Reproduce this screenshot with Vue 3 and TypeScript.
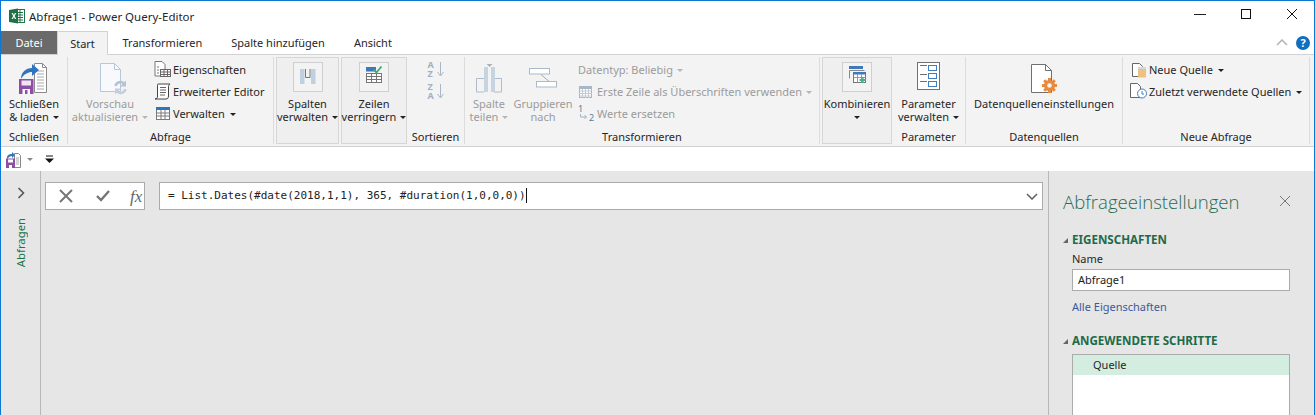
<script setup lang="ts">
const title: string = 'Abfrage1 - Power Query-Editor'
const formula: string = '= List.Dates(#date(2018,1,1), 365, #duration(1,0,0,0))'
const tabs: string[] = ['Transformieren', 'Spalte hinzufügen', 'Ansicht']
</script>

<template>
  <div class="win">
    <header class="titlebar">
      <svg class="xl" width="16" height="16" viewBox="0 0 16 16">
        <rect x="6" y="1.500" width="9.500" height="13" fill="#fff" stroke="#217346" />
        <path d="M8 4.500h6M8 7h6M8 9.500h6M8 12h6M11 2v12" stroke="#217346" stroke-width="1" />
        <path d="M0 2l9-1.500v15L0 14z" fill="#1e7145" />
        <path d="M2.500 5l1.700 3-1.700 3h1.400l1-2 1 2h1.400l-1.700-3 1.700-3H5.900l-1 2-1-2z" fill="#fff" />
      </svg>
      <span class="wintitle">{{ title }}</span>
      <div class="winbtns">
        <svg width="12" height="12" viewBox="0 0 12 12"><path d="M0 5.500h12" stroke="#222" /></svg>
        <svg width="12" height="12" viewBox="0 0 12 12"><rect x="1.500" y=".5" width="9" height="9" fill="none" stroke="#111" /></svg>
        <svg width="12" height="12" viewBox="0 0 12 12"><path d="M1 0l10 10M11 0L1 10" stroke="#111" /></svg>
      </div>
    </header>

    <nav class="tabs">
      <span class="tab file">Datei</span>
      <span class="tab active">Start</span>
      <span v-for="t in tabs" :key="t" class="tab">{{ t }}</span>
      <span class="tab-right">
        <svg width="12" height="7" viewBox="0 0 12 7"><path d="M1 6l5-5 5 5" fill="none" stroke="#b3b3b3" stroke-width="1.500" /></svg>
        <span class="help">?</span>
      </span>
    </nav>

    <section class="ribbon">
      <div class="group g-close">
        <div class="body">
          <button class="big">
            <span class="ico">
              <svg width="30" height="34" viewBox="0 0 30 34">
                <path d="M15.500 3.500h8l4 4v25h-12z" fill="#fff" stroke="#8a8a8a" />
                <path d="M23.500 3.500v4h4" fill="none" stroke="#8a8a8a" />
                <path d="M18 11h7M18 14h7M18 17h7M18 20h7M18 23h7M18 26h7M18 29h7" stroke="#a8a8a8" />
                <path d="M2 19c0-7 5-11 11-11V4l7 6-7 6v-4c-4 0-8 2-11 7z" fill="#2f74c0" />
                <rect x="0" y="19" width="14.500" height="15" fill="#8e4ea6" />
                <rect x="2.500" y="20.500" width="9.500" height="5" fill="#efe6f3" />
                <rect x="3.500" y="29" width="7.500" height="5" fill="#fff" />
                <rect x="6" y="30" width="2.500" height="4" fill="#8e4ea6" />
              </svg>
            </span>
            <span class="lbl">Schließen</span>
            <span class="lbl">&amp; laden<i class="caret" /></span>
          </button>
        </div>
        <div class="gname">Schließen</div>
      </div>

      <div class="group g-query">
        <div class="body">
          <button class="big off w-refresh">
            <span class="ico">
              <svg class="ovf" width="30" height="32" viewBox="0 0 30 32">
                <path d="M5.500 2.500h14l6 6v22h-20z" fill="#f7f9fc" stroke="#b7c6dc" />
                <path d="M19.500 2.500v6h6" fill="none" stroke="#b7c6dc" />
                <path d="M20.500 25a5 5 0 0 1 8.500-2.500" fill="none" stroke="#b3c3d3" stroke-width="2.500" />
                <path d="M31 19.500v6h-6z" fill="#b3c3d3" />
                <path d="M30.500 28a5 5 0 0 1-8.500 2.500" fill="none" stroke="#c3cfdb" stroke-width="2.500" />
                <path d="M20 33.500v-6h6z" fill="#c3cfdb" />
              </svg>
            </span>
            <span class="lbl">Vorschau</span>
            <span class="lbl">aktualisieren<i class="caret" /></span>
          </button>
          <div class="rows">
            <div class="row">
              <svg width="18" height="17" viewBox="0 0 18 17">
                <path d="M1 .5h7l3 3V15H1z" fill="#fff" stroke="#777" />
                <path d="M3 6h2M3 9h2M3 12h2" stroke="#777" />
                <rect x="6.500" y="8.500" width="10" height="7" fill="#fff" stroke="#666" />
                <path d="M6.500 11h10M6.500 13.500h10M10 8.500v7M13.500 8.500v7" stroke="#666" />
              </svg>
              <span>Eigenschaften</span>
            </div>
            <div class="row">
              <svg width="18" height="17" viewBox="0 0 18 17">
                <path d="M4 1h12c-1.500 1-1.500 2-1.500 3v9c0 2-1 3-2.500 3H1c1.500-.5 2.500-1 2.500-2V3C3.500 2 3.500 1 4 1z" fill="#fff" stroke="#444" />
                <path d="M6 4.500h6M6 7h6M6 9.500h6M6 12h5" stroke="#666" />
              </svg>
              <span>Erweiterter Editor</span>
            </div>
            <div class="row">
              <svg width="18" height="17" viewBox="0 0 18 17">
                <rect x="2.500" y="3.500" width="13" height="11" fill="#fff" stroke="#7a7a7a" />
                <rect x="2" y="2" width="14" height="3" fill="#2f74c0" />
                <path d="M2.500 8h13M2.500 11h13M7 5v9M11 5v9" stroke="#7a7a7a" />
              </svg>
              <span>Verwalten<i class="caret sp" /></span>
            </div>
          </div>
        </div>
        <div class="gname">Abfrage</div>
      </div>

      <button class="pressed w-col">
        <span class="box">
          <svg width="22" height="22" viewBox="0 0 22 22">
            <rect x="3" y="3" width="4.500" height="15" fill="#bfd0e0" />
            <rect x="14" y="3" width="4.500" height="15" fill="#bfd0e0" />
            <path d="M8.500 3v8.500h4.500V3" fill="none" stroke="#777" />
          </svg>
        </span>
        <span class="lbl">Spalten</span>
        <span class="lbl">verwalten<i class="caret" /></span>
      </button>
      <button class="pressed w-row">
        <span class="box">
          <svg width="22" height="22" viewBox="0 0 22 22">
            <rect x="3" y="1" width="10" height="4.500" fill="#3f79b9" />
            <rect x="3.500" y="7.500" width="15" height="9" fill="#fff" stroke="#777" />
            <path d="M3.500 10.500h15M3.500 13.500h15M8.500 7.500v9M13.500 7.500v9" stroke="#777" />
            <path d="M10.500 3.500l3 3 5-6" fill="none" stroke="#42a97a" stroke-width="1.800" />
          </svg>
        </span>
        <span class="lbl">Zeilen</span>
        <span class="lbl">verringern<i class="caret" /></span>
      </button>

      <div class="group g-sort">
        <div class="body sortbody">
          <div class="sorticon">
            <span class="az"><b>A</b><b>Z</b></span>
            <svg width="7" height="17" viewBox="0 0 7 17"><path d="M3.500 1v13M.5 11l3 4 3-4" fill="none" stroke="#a8b6c8" /></svg>
          </div>
          <div class="sorticon">
            <span class="az"><b>Z</b><b>A</b></span>
            <svg width="7" height="17" viewBox="0 0 7 17"><path d="M3.500 1v13M.5 11l3 4 3-4" fill="none" stroke="#a8b6c8" /></svg>
          </div>
        </div>
        <div class="gname">Sortieren</div>
      </div>

      <div class="group g-trans">
        <div class="body">
          <button class="big off w-split">
            <span class="ico">
              <svg width="30" height="32" viewBox="0 0 30 32">
                <path d="M10 17.500H2.500V31H10M20 17.500h7.500V31H20" fill="none" stroke="#aebccb" />
                <rect x="10" y="6" width="4" height="25" fill="#c6d3e0" />
                <rect x="17" y="6" width="4" height="25" fill="#c6d3e0" />
                <path d="M12.500 3h6l-3 3z" fill="#aab3bd" />
              </svg>
            </span>
            <span class="lbl">Spalte</span>
            <span class="lbl">teilen<i class="caret" /></span>
          </button>
          <button class="big off w-group">
            <span class="ico">
              <svg width="30" height="32" viewBox="0 0 30 32">
                <rect x="1.500" y="7.500" width="20" height="5.500" fill="#fff" stroke="#a9bacb" />
                <rect x="8.500" y="20.500" width="20" height="5.500" fill="#fff" stroke="#a9bacb" />
                <path d="M13 13.500l8 7" stroke="#a9a9a9" />
              </svg>
            </span>
            <span class="lbl">Gruppieren</span>
            <span class="lbl">nach</span>
          </button>
          <div class="rows off">
            <div class="row short"><span>Datentyp: Beliebig<i class="caret" /></span></div>
            <div class="row first">
              <svg width="15" height="15" viewBox="0 0 15 15">
                <rect x="1.500" y="2.500" width="12" height="11" fill="#fff" stroke="#a8b6c5" />
                <rect x="1" y="2" width="13" height="3" fill="#a8b6c5" />
                <path d="M1.500 7h12M1.500 9.500h12M1.500 12h12M4.500 5v9M7.500 5v9M10.500 5v9" stroke="#c2ccd6" />
              </svg>
              <span>Erste Zeile als Überschriften verwenden<i class="caret" /></span>
            </div>
            <div class="row tight">
              <svg class="ovf" width="18" height="20" viewBox="0 0 18 20">
                <text x="0" y="9" class="num">1</text>
                <text x="11" y="18" class="num">2</text>
                <path d="M2.500 11v3h6M6.500 12l2 2-2 2" fill="none" stroke="#9fb2c6" />
              </svg>
              <span>Werte ersetzen</span>
            </div>
          </div>
        </div>
        <div class="gname">Transformieren</div>
      </div>

      <button class="pressed w-comb">
        <span class="box">
          <svg width="22" height="22" viewBox="0 0 22 22">
            <rect x="3" y="0" width="14" height="3" fill="#3f79b9" />
            <path d="M3.500 12.500v-8h15" fill="none" stroke="#888" />
            <rect x="7.500" y="6.500" width="12" height="10" fill="#fff" stroke="#777" />
            <rect x="7" y="6" width="13" height="2.500" fill="#3f79b9" />
            <path d="M7.500 11.500h12M11.500 8v8.500M15.500 8v8.500" stroke="#999" />
            <path d="M16.500 11v6M13.500 14h6" stroke="#4fae88" stroke-width="2.200" />
          </svg>
        </span>
        <span class="lbl">Kombinieren</span>
        <span class="lbl"><i class="caret solo" /></span>
      </button>

      <div class="group g-param">
        <div class="body">
          <button class="big w-param">
            <span class="ico">
              <svg width="24" height="30" viewBox="0 0 24 30">
                <rect x=".5" y=".5" width="22" height="27" fill="#fff" stroke="#707070" />
                <path d="M3 3.500h7M3 12.500h7M3 19.500h7" stroke="#707070" />
                <rect x="11.500" y="3.500" width="8" height="5" fill="#fff" stroke="#3d7fc2" />
                <rect x="11.500" y="11.500" width="8" height="5" fill="#fff" stroke="#3d7fc2" />
                <rect x="11.500" y="19.500" width="8" height="5" fill="#fff" stroke="#3d7fc2" />
              </svg>
            </span>
            <span class="lbl">Parameter</span>
            <span class="lbl">verwalten<i class="caret" /></span>
          </button>
        </div>
        <div class="gname">Parameter</div>
      </div>

      <div class="group g-src">
        <div class="body">
          <button class="big w-src">
            <span class="ico">
              <svg class="ovf" width="28" height="32" viewBox="0 0 28 32">
                <path d="M1.500 3.500h14l6 6v22h-20z" fill="#fff" stroke="#707070" />
                <path d="M15.500 3.500v6h6" fill="none" stroke="#707070" />
                <path d="M19.500 17v15M12 24.500h15M14.200 19.200l10.600 10.600M24.800 19.200L14.200 29.800" stroke="#e98a3a" stroke-width="3" />
                <circle cx="19.500" cy="24.500" r="5.500" fill="#e98a3a" />
                <circle cx="19.500" cy="24.500" r="2.300" fill="#f3f3f3" />
              </svg>
            </span>
            <span class="lbl">Datenquelleneinstellungen</span>
          </button>
        </div>
        <div class="gname">Datenquellen</div>
      </div>

      <div class="group g-new">
        <div class="body">
          <div class="rows nq">
            <div class="row">
              <svg width="18" height="17" viewBox="0 0 18 17">
                <path d="M3.500 2.500h7l3 3v10h-10z" fill="#fff" stroke="#666" />
                <rect x="9" y="7" width="8" height="9.500" rx="1" fill="#edc183" />
                <rect x="9" y="6" width="8" height="2" fill="#d7d7d7" />
              </svg>
              <span>Neue Quelle<i class="caret sp" /></span>
            </div>
            <div class="row">
              <svg width="18" height="17" viewBox="0 0 18 17">
                <path d="M1.500 .5h7l3 3v11h-10z" fill="#fff" stroke="#666" />
                <circle cx="13" cy="10.500" r="4.500" fill="#fff" stroke="#3d7fc2" />
                <path d="M13 8v3h2" fill="none" stroke="#3d7fc2" />
              </svg>
              <span>Zuletzt verwendete Quellen<i class="caret sp" /></span>
            </div>
          </div>
        </div>
        <div class="gname">Neue Abfrage</div>
      </div>
    </section>

    <div class="qat">
      <svg width="16" height="17" viewBox="0 0 16 17">
        <path d="M8.500 2.500h4l2 2v12h-6z" fill="#fff" stroke="#888" />
        <path d="M10 7h3M10 9h3M10 11h3M10 13h3" stroke="#aaa" />
        <path d="M1 7c0-3 2-4 5-4V1l3 3-3 3V5C4 5 3 6 1 8z" fill="#2f74c0" />
        <rect x="0" y="7.500" width="9" height="9.500" fill="#8e4ea6" />
        <rect x="2" y="8.500" width="5" height="3" fill="#fff" />
        <rect x="3" y="14" width="3" height="3" fill="#fff" />
      </svg>
      <i class="caret qc" />
      <svg class="qm" width="9" height="9" viewBox="0 0 9 9">
        <path d="M1 1h7" stroke="#111" /><path d="M0 3.500h9L4.500 8z" fill="#111" />
      </svg>
    </div>

    <main class="main">
      <aside class="rail">
        <svg width="8" height="12" viewBox="0 0 8 12"><path d="M1.500 1l5 5-5 5" fill="none" stroke="#555" stroke-width="1.600" /></svg>
        <span class="vert">Abfragen</span>
      </aside>

      <div class="center">
        <div class="fbar">
          <div class="fbtns">
            <svg width="16" height="16" viewBox="0 0 16 16"><path d="M2 2l12 12M14 2L2 14" stroke="#767676" stroke-width="2" /></svg>
            <svg width="16" height="16" viewBox="0 0 16 16"><path d="M2 8l4 4 8-9" fill="none" stroke="#767676" stroke-width="2.400" /></svg>
            <span class="fx">fx</span>
          </div>
          <div class="finput">
            <span class="code">{{ formula }}</span><span class="cursor" />
            <svg class="chev" width="12" height="7" viewBox="0 0 12 7"><path d="M1 1l5 5 5-5" fill="none" stroke="#666" stroke-width="1.600" /></svg>
          </div>
        </div>
      </div>

      <aside class="panel">
        <div class="phead">
          <h2>Abfrageeinstellungen</h2>
          <svg width="12" height="12" viewBox="0 0 12 12"><path d="M1 1l10 10M11 1L1 11" stroke="#777" /></svg>
        </div>
        <div class="sect s1"><i class="tri" />EIGENSCHAFTEN</div>
        <div class="fld">
          <label>Name</label>
          <div class="nameinput">Abfrage1</div>
          <a>Alle Eigenschaften</a>
        </div>
        <div class="sect s2"><i class="tri" />ANGEWENDETE SCHRITTE</div>
        <div class="steps"><div class="step">Quelle</div></div>
      </aside>
    </main>
  </div>
</template>

<style scoped>
.win {
  box-sizing: border-box;
  width: 1315px;
  height: 415px;
  border: solid #0b78d4;
  border-width: 1px 1px 0;
  display: flex;
  flex-direction: column;
  overflow: hidden;
  background: #fff;
  font-family: "Noto Sans", "Open Sans", sans-serif;
  font-size: 11px;
  color: #262626;
}
.titlebar {
  height: 30px;
  flex: none;
  display: flex;
  align-items: center;
  padding-left: 8px;
}
.wintitle { margin-left: 4px; font-size: 11.5px; }
.winbtns {
  margin-left: auto;
  display: flex;
  gap: 34px;
  margin-right: 16px;
  position: relative;
  top: -1px;
}
.tabs {
  flex: none;
  display: flex;
  align-items: stretch;
  border-bottom: 1px solid #d2d2d2;
  box-sizing: border-box;
  height: 24px;
}
.tab { padding: 0 14.5px; line-height: 23px; }
.file { background: #6a6a6a; color: #fff; width: 56px; box-sizing: border-box; text-align: center; padding: 0; }
.active {
  background: #f3f3f3;
  border: solid #d2d2d2;
  border-width: 1px 1px 0;
  margin-bottom: -1px;
  box-sizing: border-box;
  width: 51px;
  padding: 0;
  text-align: center;
}
.tab-right { margin-left: auto; display: flex; align-items: center; gap: 8px; padding-right: 4px; }
.help {
  width: 14px; height: 14px; border-radius: 50%;
  background: #106ebe; color: #fff; font-weight: 700; font-size: 11px;
  line-height: 14px; text-align: center;
}
.ribbon {
  flex: none;
  display: flex;
  background: #f3f3f3;
  border-bottom: 1px solid #d2d2d2;
  padding: 2px 0 2px;
  height: 87px;
}
.group { display: flex; flex-direction: column; border-right: 1px solid #dcdcdc; box-sizing: border-box; }
.body { flex: 1; display: flex; min-height: 0; }
.gname { height: 19px; box-sizing: border-box; padding-top: 3px; line-height: 17px; text-align: center; }
.g-close { width: 67px; }
.g-query { width: 206px; margin-right: 2px; }
.g-sort { width: 58px; }
.g-trans { width: 355px; margin-right: 2px; }
.g-param { width: 74px; }
.g-src { width: 157px; }
.g-new { width: 187px; }

button { all: unset; box-sizing: border-box; display: flex; flex-direction: column; align-items: center; }
.big { width: 100%; }
.ico { height: 40px; display: flex; align-items: center; justify-content: center; flex: none; }
.ovf { overflow: visible; }
.lbl { height: 13px; line-height: 13px; white-space: nowrap; }
.off, .off .lbl { color: #9b9b9b; }
.w-refresh { width: 84px; flex: none; }
.w-split { width: 44px; flex: none; margin-left: 2px; }
.w-group { width: 64px; flex: none; }
.w-param, .w-src { width: 100%; }

.caret {
  display: inline-block; width: 0; height: 0; margin-left: 4px; vertical-align: 2px;
  border: 3px solid transparent; border-top-color: #222; border-bottom-width: 0;
}
.caret.sp { margin-left: 5px; }
.off .caret { border-top-color: #b5b5b5; }
.caret.solo { margin-left: 0; }

.rows { display: flex; flex-direction: column; padding-top: 1px; }
.row { height: 22px; display: flex; align-items: center; gap: 1px; white-space: nowrap; }
.row.first { gap: 4px; }
.g-query .rows { margin-left: 2px; }
.g-trans .rows { margin-left: 3px; }
.nq { margin-left: 6px; }
.nq .row { gap: 2px; }

.pressed {
  width: 63px;
  height: 87px;
  flex: none;
  background: #efefef;
  border: 1px solid #d6d6d6;
  padding-top: 4px;
}
.w-row { width: 66px; margin-left: 2px; }
.w-comb { width: 70px; }
.box {
  width: 30px; height: 30px; box-sizing: border-box;
  border: 1px solid #cfcfcf; background: #f3f3f3;
  display: flex; align-items: center; justify-content: center;
  margin-bottom: 5px;
}

.sortbody { flex-direction: column; align-items: center; padding-top: 4px; gap: 5px; flex: none; height: 68px; box-sizing: border-box; }
.sorticon { display: flex; gap: 2px; width: 16px; height: 17px; }
.az { display: flex; flex-direction: column; width: 7px; color: #9fb0c4; font-size: 9px; line-height: 8.500px; }
.az b { font-weight: 700; }
.num { font-size: 9px; fill: #5b7a99; }

.qat {
  height: 24px;
  flex: none;
  display: flex;
  align-items: center;
  padding-left: 5px;
}
.caret.qc { margin-left: 5px; border-top-color: #888; }
.qm { margin-left: 12px; }

.main { flex: 1; display: flex; min-height: 0; background: #e6e6e6; }
.rail {
  width: 40px; flex: none; box-sizing: border-box;
  border-right: 1px solid #b8b8b8;
  display: flex; flex-direction: column; align-items: center;
  padding-top: 16px; gap: 19px;
}
.vert {
  writing-mode: vertical-rl; transform: rotate(180deg);
  color: #217346; font-size: 11.3px;
}
.center { flex: 1; padding: 11px 5px 0 4px; min-width: 0; }
.fbar { display: flex; gap: 14px; height: 28px; }
.fbtns {
  width: 100px; box-sizing: border-box; flex: none;
  background: #fff; border: 1px solid #ababab;
  display: flex; align-items: center; padding-left: 12px; gap: 21px;
}
.fx { font-family: "Liberation Serif", serif; font-style: italic; font-size: 17px; color: #666; line-height: 1; margin-left: -2px; }
.finput {
  flex: 1; min-width: 0; background: #fff; border: 1px solid #ababab;
  display: flex; align-items: center; padding-left: 8px;
}
.code { font-family: "DejaVu Sans Mono", monospace; font-size: 11px; white-space: pre; color: #222; margin-bottom: 2px; }
.cursor { width: 1px; height: 15px; background: #111; margin-bottom: 2px; }
.chev { margin-left: auto; margin-right: 4px; }
.panel {
  width: 266px; flex: none; box-sizing: border-box;
  border-left: 1px solid #b8b8b8;
  padding: 15px 0 0 14px;
}
.phead { display: flex; align-items: center; height: 30px; }
.phead h2 { margin: 0; font-size: 18.6px; font-weight: 300; color: #2b6b52; font-family: "Open Sans", "Noto Sans", sans-serif; white-space: nowrap; }
.phead svg { margin-left: auto; margin-right: 23px; }
.sect {
  color: #1d6b4a; font-weight: 700; font-size: 11.6px; height: 16px; line-height: 16px;
  display: flex; align-items: center; white-space: nowrap;
}
.s1 { margin-top: 16px; }
.s2 { margin-top: 18px; }
.tri {
  width: 0; height: 0; margin-right: 4px;
  border-style: solid; border-width: 0 0 5px 5px;
  border-color: transparent transparent #666 transparent;
}
.fld { padding-left: 9px; margin-top: 1px; }
.fld label { display: block; height: 20px; line-height: 20px; }
.nameinput {
  width: 218px; height: 22px; box-sizing: border-box;
  background: #fff; border: 1px solid #ababab;
  padding-left: 5px; line-height: 20px; color: #222;
}
.fld a { display: block; margin-top: 8px; height: 16px; line-height: 16px; color: #3b5a9a; }
.steps {
  margin: 5px 0 0 9px; width: 218px; height: 80px; box-sizing: border-box;
  background: #fff; border: 1px solid #ababab;
}
.step { height: 20px; line-height: 20px; background: #d3eee0; padding-left: 20px; }
</style>
